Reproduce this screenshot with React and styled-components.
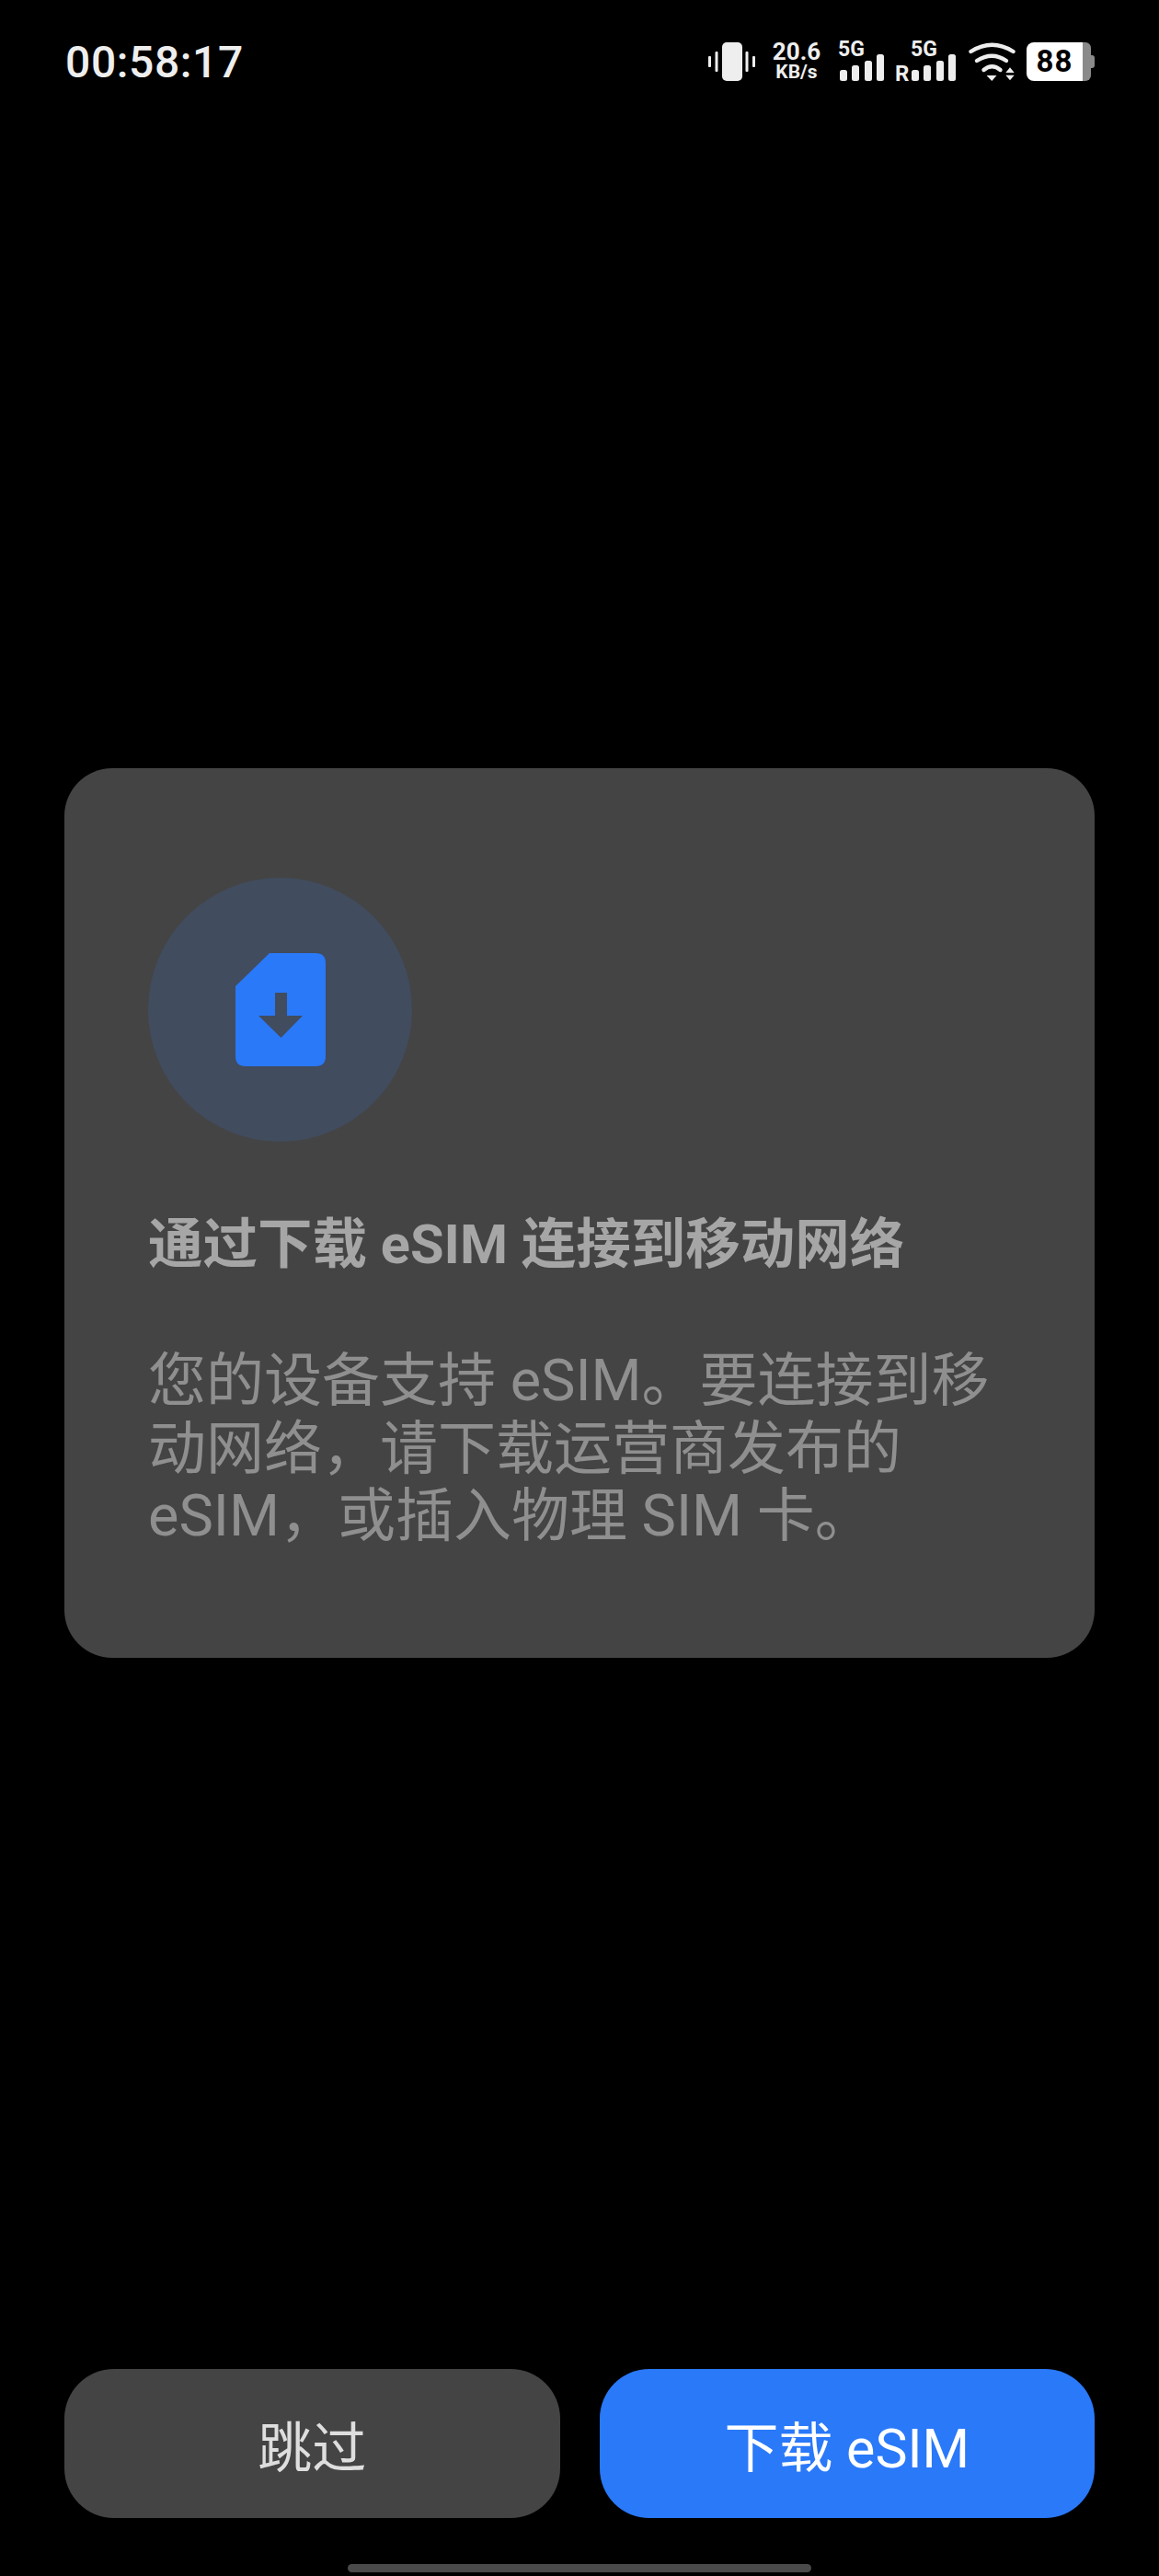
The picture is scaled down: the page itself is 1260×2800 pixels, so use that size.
import React from 'react';
import styled, { createGlobalStyle } from 'styled-components';

const GlobalStyle = createGlobalStyle`
  html, body {
    margin: 0;
    padding: 0;
    background: #000;
  }
`;

const FONT = `Roboto, "Noto Sans CJK SC", sans-serif`;
const BLUE = '#2979f9';
const PANEL = '#444444';

const Screen = styled.div`
  width: 1260px;
  height: 2800px;
  display: flex;
  flex-direction: column;
  background: #000;
  font-family: ${FONT};
  overflow: hidden;
`;

const StatusBar = styled.div`
  height: 134px;
  padding: 0 70px 0 71px;
  display: flex;
  align-items: center;
  justify-content: space-between;
  color: #eeeeee;
`;

const Clock = styled.div`
  font-size: 48px;
  font-weight: 500;
  letter-spacing: 0.6px;
`;

const StatusIcons = styled.div`
  display: flex;
  align-items: center;
  height: 42px;
`;

const Speed = styled.div`
  width: 52px;
  margin: 0 19px;
  display: flex;
  flex-direction: column;
  align-items: center;
  font-weight: 700;
  color: #eee;
`;

const SpeedValue = styled.span`
  font-size: 26px;
  line-height: 23px;
`;

const SpeedUnit = styled.span`
  font-size: 21px;
  line-height: 21px;
`;

const Signal = styled.div`
  position: relative;
  width: ${p => p.$width}px;
  height: 42px;
  margin-right: ${p => p.$gap}px;
`;

const SignalLabel = styled.span`
  position: absolute;
  top: ${p => p.$top}px;
  left: ${p => p.$left}px;
  font-size: ${p => p.$size}px;
  line-height: 18px;
  font-weight: 700;
  color: #eee;
`;

const Bars = styled.div`
  position: absolute;
  right: 0;
  bottom: 0;
  display: flex;
  align-items: flex-end;
  gap: 5.5px;
`;

const Bar = styled.i`
  display: block;
  width: 8px;
  height: ${p => p.$h}px;
  border-radius: 2.5px;
  background: #eee;
`;

const Battery = styled.div`
  margin-left: 12px;
  display: flex;
  align-items: center;
`;

const BatteryLevel = styled.div`
  width: 61px;
  height: 42px;
  border-radius: 8px 0 0 8px;
  background: #fff;
  color: #000;
  font-size: 33px;
  font-weight: 700;
  line-height: 42px;
  text-align: center;
  letter-spacing: 1px;
`;

const BatteryRest = styled.div`
  width: 9px;
  height: 42px;
  border-radius: 0 6px 6px 0;
  background: #8a8a8a;
`;

const BatteryCap = styled.div`
  width: 4px;
  height: 14px;
  border-radius: 0 3px 3px 0;
  background: #8a8a8a;
`;

const Card = styled.section`
  margin: 701px 70px 0;
  height: 967px;
  box-sizing: border-box;
  padding: 119px 91px 0;
  border-radius: 52px;
  background: ${PANEL};
`;

const IconCircle = styled.div`
  width: 287px;
  height: 287px;
  border-radius: 50%;
  background: #414c5e;
  display: flex;
  align-items: center;
  justify-content: center;
`;

const Title = styled.h1`
  margin: 77px 0 0;
  font-size: 59.5px;
  line-height: 70px;
  font-weight: 700;
  color: #a6a6a6;
`;

const Description = styled.p`
  margin: 76px 0 0;
  font-size: 63px;
  line-height: 73.5px;
  font-weight: 400;
  color: #8f8f8f;
`;

const Footer = styled.div`
  margin-top: auto;
  padding: 0 70px;
  display: flex;
  gap: 43px;
`;

const ActionButton = styled.button`
  flex: 1;
  height: 162px;
  padding: 0;
  border: none;
  border-radius: 54px;
  background: ${p => (p.$primary ? BLUE : PANEL)};
  color: ${p => (p.$primary ? '#fff' : '#dedede')};
  font-family: ${FONT};
  font-size: 59px;
  font-weight: 400;
`;

const HomeBar = styled.div`
  width: 504px;
  height: 9px;
  margin: 50px auto 4px;
  border-radius: 5px;
  background: #4a4a4a;
`;

const VibrateIcon = () => (
  <svg width="51" height="42" viewBox="0 0 51 42" fill="#eee">
    <rect x="15" y="0" width="22" height="42" rx="5" />
    <rect x="7.5" y="10" width="3" height="22" rx="1" />
    <rect x="40.5" y="10" width="3" height="22" rx="1" />
    <rect x="0" y="15" width="3" height="12" rx="1" />
    <rect x="48" y="15" width="3" height="12" rx="1" />
  </svg>
);

const WifiIcon = () => (
  <svg width="51" height="42" viewBox="0 0 51 42" fill="none" stroke="#eee" strokeWidth="4.4" strokeLinecap="round">
    <path d="M2.5 10Q25.5 -4.5 48.5 10" />
    <path d="M9 20Q25.5 9.5 41 20" />
    <path d="M16.5 30Q25.5 22.5 34.5 30" />
    <g fill="#eee" stroke="none">
      <path d="M19.5 36H30.5L25.3 42Z" />
      <path d="M40.3 33H49.7L45 27.3Z" />
      <path d="M40.3 35.7H49.7L45 41.3Z" />
    </g>
  </svg>
);

// sim card with the cut corner, arrow uses the circle colour
const SimDownloadIcon = () => (
  <svg width="98" height="123" viewBox="0 0 98 123">
    <path
      d="M37 0H87Q98 0 98 11V112Q98 123 87 123H11Q0 123 0 112V36Z"
      fill={BLUE}
    />
    <path d="M43 43H56V68H73L49.5 92L25 68H43Z" fill="#414c5e" />
  </svg>
);

const SignalBars = () => (
  <Bars>
    {[12, 17, 22, 29].map(h => <Bar key={h} $h={h} />)}
  </Bars>
);

const App = () => {
  return (
    <Screen>
      <GlobalStyle />
      <StatusBar>
        <Clock>00:58:17</Clock>
        <StatusIcons>
          <VibrateIcon />
          <Speed>
            <SpeedValue>20.6</SpeedValue>
            <SpeedUnit>KB/s</SpeedUnit>
          </Speed>
          <Signal $width={50} $gap={12}>
            <SignalLabel $top={-1} $left={0} $size={23}>5G</SignalLabel>
            <SignalBars />
          </Signal>
          <Signal $width={66} $gap={14}>
            <SignalLabel $top={-1} $left={17} $size={23}>5G</SignalLabel>
            <SignalLabel $top={25} $left={0} $size={24}>R</SignalLabel>
            <SignalBars />
          </Signal>
          <WifiIcon />
          <Battery>
            <BatteryLevel>88</BatteryLevel>
            <BatteryRest />
            <BatteryCap />
          </Battery>
        </StatusIcons>
      </StatusBar>

      <Card>
        <IconCircle>
          <SimDownloadIcon />
        </IconCircle>
        <Title>通过下载 eSIM 连接到移动网络</Title>
        <Description>您的设备支持 eSIM。要连接到移动网络，请下载运营商发布的 eSIM，或插入物理 SIM 卡。</Description>
      </Card>

      <Footer>
        <ActionButton>跳过</ActionButton>
        <ActionButton $primary>下载 eSIM</ActionButton>
      </Footer>
      <HomeBar />
    </Screen>
  );
};

export default App;
